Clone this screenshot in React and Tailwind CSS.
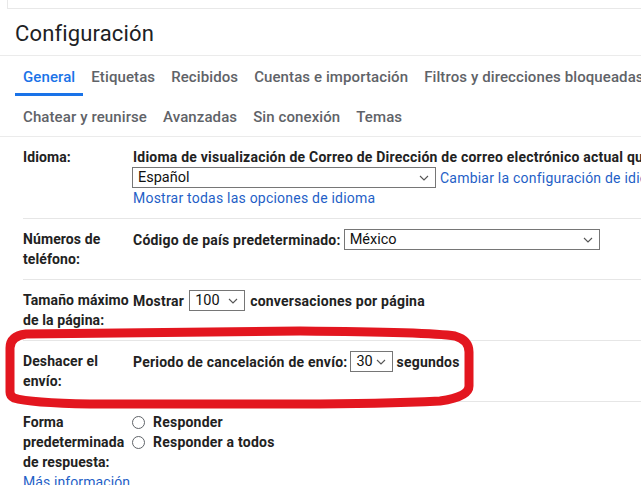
import React from 'react';

const font = { fontFamily: 'Roboto, Arial, sans-serif' };

const Chevron = () => (
  <svg width="10" height="6" viewBox="0 0 10 6" className="shrink-0">
    <polyline points="1,1 5,5 9,1" fill="none" stroke="#555" strokeWidth="1.1" />
  </svg>
);

const Select = ({ value, className }) => (
  <div className={`shrink-0 h-[21px] border border-[#767676] bg-white flex items-center justify-between pl-[5px] pr-[6px] text-[14.5px] font-normal tracking-normal text-[#111] ${className}`}>
    <span>{value}</span>
    <Chevron />
  </div>
);

const Row = ({ label, children, last }) => (
  <div className={`ml-[23px] flex pt-[10px] pb-[10px] ${last ? '' : 'border-b border-[#e6e6e6]'}`}>
    <div className="w-[110px] shrink-0 text-[14px] font-bold leading-[20px] text-[#222] tracking-[0.1px]">{label}</div>
    <div className="flex-1 min-w-0 text-[14px] font-bold leading-[20px] text-[#222] tracking-[0.22px]">{children}</div>
  </div>
);

const tabsA = ['General', 'Etiquetas', 'Recibidos', 'Cuentas e importación', 'Filtros y direcciones bloqueadas'];
const tabsB = ['Chatear y reunirse', 'Avanzadas', 'Sin conexión', 'Temas'];

const Radio = ({ text }) => (
  <div className="flex items-center gap-[8px] h-[20px] ml-[-1px]">
    <span className="w-[13px] h-[13px] rounded-full border border-[#5f6368] shrink-0" />
    <span>{text}</span>
  </div>
);

export default function App() {
  return (
    <div className="relative w-[641px] h-[485px] overflow-hidden bg-white" style={font}>
      <div className="ml-[7px] h-[9px] border-l border-b border-[#e8e8e8]" />

      {/* Title */}
      <div className="h-[47px] flex items-center pl-[15px] pt-[2px] border-b border-[#ebebeb]">
        <h1 className="text-[22px] font-normal text-[#202124] tracking-[0.15px]">Configuración</h1>
      </div>

      {/* Tabs */}
      <div className="border-b border-[#ebebeb] whitespace-nowrap">
        <div className="flex pl-[15px] h-[40px]">
          {tabsA.map((t, i) => (
            <div
              key={t}
              className={`px-[8px] pt-[6px] flex items-center text-[15px] font-medium tracking-[0.1px] border-b-[3px] ${i === 0 ? 'text-[#1a73e8] border-[#1a73e8]' : 'text-[#5f6368] border-transparent'}`}
            >
              {t}
            </div>
          ))}
        </div>
        <div className="flex pl-[15px] h-[40px]">
          {tabsB.map((t) => (
            <div key={t} className="px-[8px] pt-[2px] flex items-center text-[15px] font-medium tracking-[0.1px] text-[#5f6368]">
              {t}
            </div>
          ))}
        </div>
      </div>

      {/* Settings */}
      <div className="whitespace-nowrap">
        <Row label="Idioma:">
          <div className="overflow-hidden">Idioma de visualización de Correo de Dirección de correo electrónico actual que</div>
          <div className="flex items-center gap-[4px] ml-[-1px]">
            <Select value="Español" className="w-[304px]" />
            <span className="font-normal text-[#1f5fc7]">Cambiar la configuración de idioma</span>
          </div>
          <div className="font-normal text-[#1f5fc7]">Mostrar todas las opciones de idioma</div>
        </Row>

        <Row label={<>Números de<br />teléfono:</>}>
          <div className="flex items-center gap-[3px]">
            <span>Código de país predeterminado:</span>
            <Select value="México" className="w-[256px]" />
          </div>
        </Row>

        <Row label={<>Tamaño máximo<br />de la página:</>}>
          <div className="flex items-center gap-[5px]">
            <span>Mostrar</span>
            <Select value="100" className="w-[56px]" />
            <span>conversaciones por página</span>
          </div>
        </Row>

        <Row label={<>Deshacer el<br />envío:</>}>
          <div className="flex items-center gap-[3px]">
            <span>Periodo de cancelación de envío:</span>
            <Select value="30" className="w-[43px]" />
            <span>segundos</span>
          </div>
        </Row>

        <Row
          last
          label={
            <>
              Forma<br />predeterminada<br />de respuesta:
              <div className="font-normal text-[#1f5fc7]">Más información</div>
            </>
          }
        >
          <Radio text="Responder" />
          <Radio text="Responder a todos" />
        </Row>
      </div>

      {/* Red annotation */}
      <svg className="absolute inset-0 pointer-events-none" width="641" height="485" viewBox="0 0 641 485">
        <path
          d="M10 392 L10 348 Q10 336 26 334 L300 331 Q430 332 455 336 Q469 340 469 352 L469 386 Q469 397 440 401 Q380 404 300 404 L90 404 Q30 403 14 398 Q10 396 10 392 Z"
          fill="none"
          stroke="#e3161f"
          strokeWidth="9"
          strokeLinejoin="round"
        />
      </svg>
    </div>
  );
}
